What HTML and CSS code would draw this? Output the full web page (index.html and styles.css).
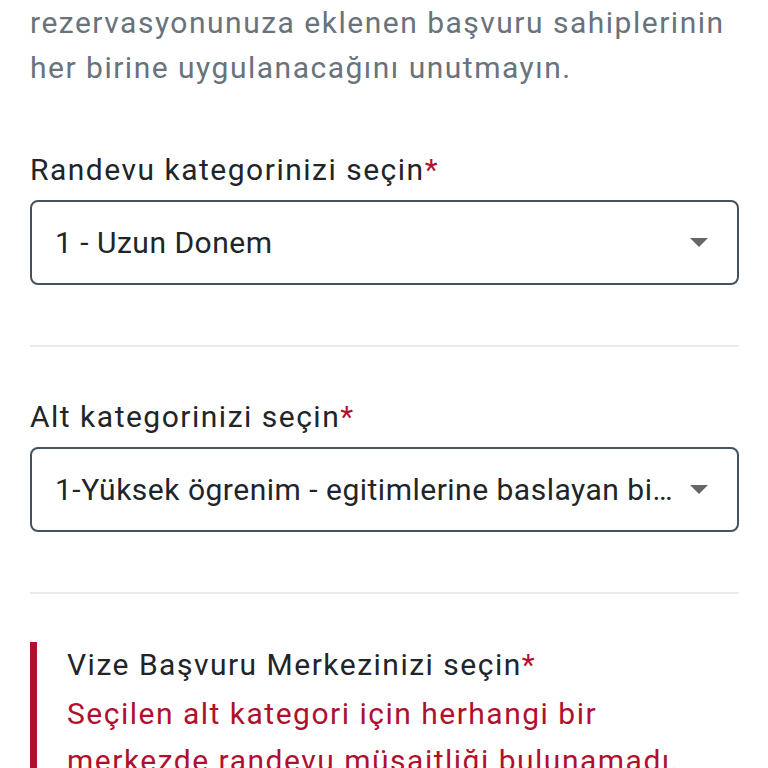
FILE: index.html
```html
<!DOCTYPE html>
<html lang="tr">
<head>
 <meta charset="UTF-8">
 <meta name="viewport" content="width=device-width, initial-scale=1.0">
 <title>Randevu</title>
 <link rel="stylesheet" href="styles.css">
</head>
<body>
 <div class="page">
  <p class="note">rezervasyonunuza eklenen başvuru sahiplerinin her birine uygulanacağını unutmayın.</p>

  <div class="field first">
   <label class="field-label">Randevu kategorinizi seçin<span class="req">*</span></label>
   <div class="select-box">
    <span class="select-value">1 - Uzun Donem</span>
    <span class="arrow"></span>
   </div>
  </div>

  <hr class="divider">

  <div class="field">
   <label class="field-label">Alt kategorinizi seçin<span class="req">*</span></label>
   <div class="select-box">
    <span class="select-value">1-Yüksek ögrenim - egitimlerine baslayan bireyler için</span>
    <span class="arrow"></span>
   </div>
  </div>

  <hr class="divider">

  <div class="error-block">
   <label class="field-label">Vize Başvuru Merkezinizi seçin<span class="req">*</span></label>
   <p class="error-text">Seçilen alt kategori için herhangi bir merkezde randevu müsaitliği bulunamadı.</p>
  </div>
 </div>
</body>
</html>
```

FILE: styles.css
```css
body {
 margin: 0;
 background: #ffffff;
 font-family: Roboto, "Noto Sans", sans-serif;
 font-size: 30px;
 letter-spacing: 1.5px;
 color: #212529;
}

.page {
 padding: 0 29px 0 30px;
}

.note {
 margin: 0;
 line-height: 45px;
 color: #68737d;
}

.field {
 margin-top: 48px;
}

.field.first {
 margin-top: 58px;
}

.field-label {
 display: block;
 line-height: 44px;
 margin-bottom: 8px;
 color: #212529;
}

.req {
 color: #b0102e;
}

.select-box {
 display: flex;
 align-items: center;
 height: 81px;
 padding: 0 29px 0 23px;
 border: 2px solid #46525e;
 border-radius: 8px;
}

.select-value {
 flex: 1;
 white-space: nowrap;
 overflow: hidden;
 text-overflow: ellipsis;
 padding-right: 12px;
 letter-spacing: 0.5px;
}

.arrow {
 width: 0;
 height: 0;
 border-left: 9px solid transparent;
 border-right: 9px solid transparent;
 border-top: 9px solid #666666;
}

.divider {
 margin: 60px 0 0;
 border: none;
 border-top: 2px solid #ebebeb;
}

.error-block {
 margin-top: 48px;
 border-left: 7px solid #b0102e;
 padding-left: 30px;
}

.error-block .field-label {
 line-height: 46px;
 margin-bottom: 2px;
}

.error-text {
 margin: 0;
 line-height: 47px;
 color: #b0102e;
}
```
